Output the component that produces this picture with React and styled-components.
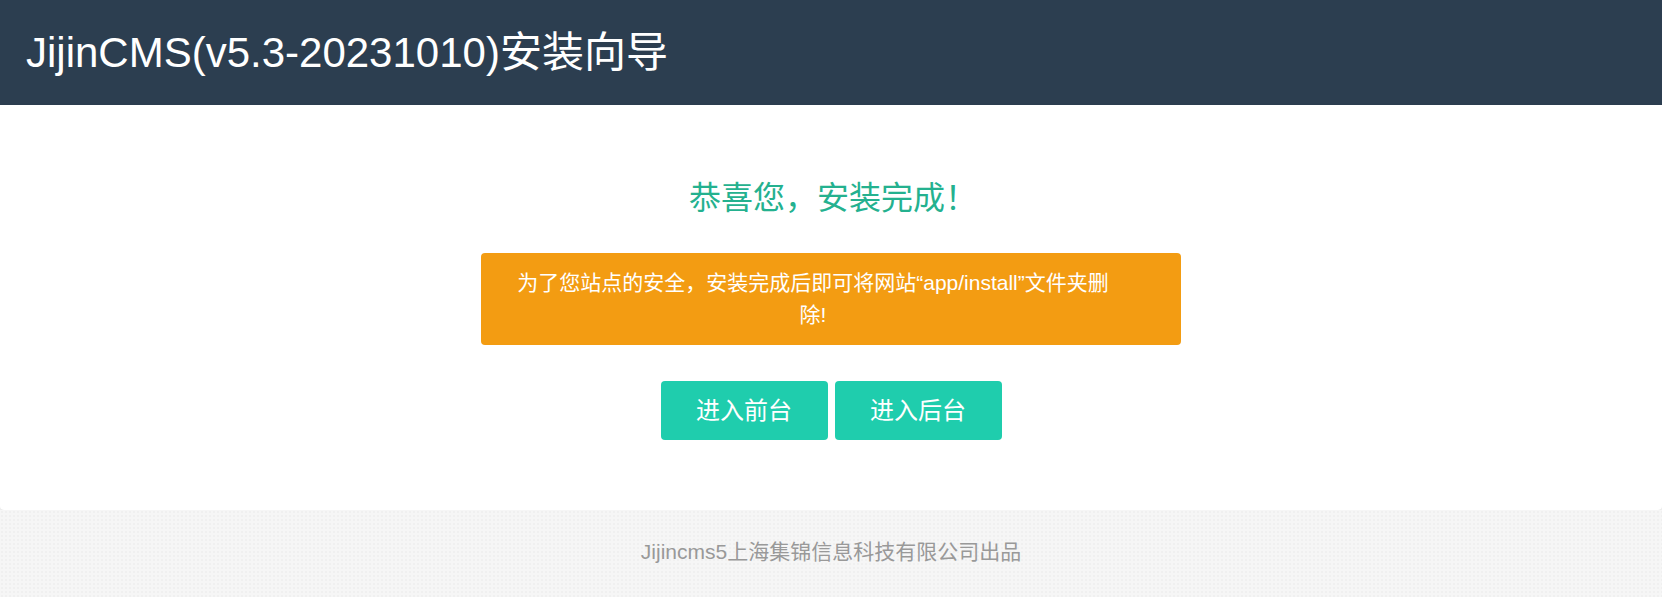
import React from 'react';
import styled, { createGlobalStyle } from 'styled-components';

const GlobalStyle = createGlobalStyle`
    html, body {
        margin: 0;
        padding: 0;
        background: #f6f6f6;
        font-family: "Liberation Sans", "Noto Sans CJK SC", sans-serif;
    }
`;

const App = () => {
    return (
        <>
            <GlobalStyle />
            <Header>
                <Title>JijinCMS(v5.3-20231010)安装向导</Title>
            </Header>
            <Card>
                <Success>恭喜您，安装完成！</Success>
                <Alert>为了您站点的安全，安装完成后即可将网站“app/install”文件夹删除!</Alert>
                <Actions>
                    <ActionButton href="#">进入前台</ActionButton>
                    <ActionButton href="#">进入后台</ActionButton>
                </Actions>
            </Card>
            <Footer>Jijincms5上海集锦信息科技有限公司出品</Footer>
        </>
    );
};

export default App;


// Styled Components

const Header = styled.header`
    height: 105px;
    background-color: #2c3e50;
    display: flex;
    align-items: center;
    padding-left: 26px;
`;

const Title = styled.h1`
    margin: 0;
    color: #fff;
    font-size: 42px;
    font-weight: normal;
    line-height: 1;
`;

const Card = styled.main`
    background: #fff;
    border-radius: 0 0 4px 4px;
    box-shadow: 0 1px 3px rgba(0, 0, 0, 0.1);
    padding: 71px 0 70px;
    display: flex;
    flex-direction: column;
    align-items: center;
`;

const Success = styled.h2`
    margin: 0;
    padding-left: 4px;
    font-size: 32px;
    line-height: 44px;
    font-weight: normal;
    color: #24b18f;
`;

const Alert = styled.div`
    box-sizing: border-box;
    width: 700px;
    margin-top: 33px;
    padding: 14px 66px 14px 30px;
    background-color: #f39c12;
    border-radius: 4px;
    color: #fff;
    font-size: 21px;
    line-height: 32px;
    text-align: center;
`;

const Actions = styled.div`
    display: flex;
    gap: 7px;
    margin-top: 36px;
`;

const ActionButton = styled.a`
    display: block;
    width: 167px;
    box-sizing: border-box;
    padding: 12px 0;
    background-color: #1fcdad;
    border-radius: 4px;
    color: #fff;
    font-size: 24px;
    line-height: 35px;
    text-align: center;
    text-decoration: none;

    &:hover {
        background-color: #1ab99b;
    }
`;

const Footer = styled.footer`
    padding: 27px 0 40px;
    text-align: center;
    color: #999;
    font-size: 21px;
    line-height: 30px;
    background-color: #f6f6f6;
    background-image: radial-gradient(rgba(0, 0, 0, 0.025) 1px, transparent 1px);
    background-size: 4px 4px;
`;
